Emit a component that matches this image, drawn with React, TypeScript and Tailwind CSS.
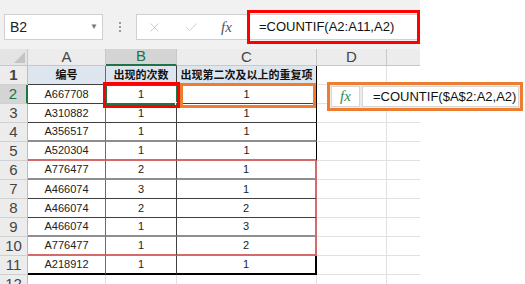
import { X, Check } from "lucide-react";

const FONT = { fontFamily: '"Liberation Sans", "Noto Sans CJK SC", sans-serif' };

const data = [
  ["A667708", "1", "1"],
  ["A310882", "1", "1"],
  ["A356517", "1", "1"],
  ["A520304", "1", "1"],
  ["A776477", "2", "1"],
  ["A466074", "3", "1"],
  ["A466074", "2", "2"],
  ["A466074", "1", "3"],
  ["A776477", "1", "2"],
  ["A218912", "1", "1"],
];

// bottom edge of table cells, row 1..11
const bottoms = [
  "border-b border-b-[#3f3f3f]",
  "border-b border-b-[#3f3f3f]",
  "border-b border-b-[#3f3f3f]",
  "border-b-2 border-b-[#8e8e8e]",
  "border-b-2 border-b-[#d46a6a]",
  "border-b-2 border-b-[#8e8e8e]",
  "border-b border-b-[#3f3f3f]",
  "border-b border-b-[#3f3f3f]",
  "border-b-2 border-b-[#8e8e8e]",
  "border-b-2 border-b-[#d46a6a]",
  "border-b-2 border-b-black",
];

const rightsC = [
  "border-r border-r-black",
  "border-r border-r-black",
  "border-r border-r-black",
  "border-r border-r-black",
  "border-r border-r-black",
  "border-r-2 border-r-[#d46a6a]",
  "border-r-2 border-r-[#d46a6a]",
  "border-r-2 border-r-[#d46a6a]",
  "border-r-2 border-r-[#d46a6a]",
  "border-r-2 border-r-[#d46a6a]",
  "border-r-2 border-r-black",
];

function RowNum({ n, active }: { n: number; active?: boolean }) {
  return (
    <div
      className={
        "w-[28px] h-full flex items-center justify-center text-[15px] border-b border-b-[#d0d0d0] " +
        (active
          ? "bg-[#d4d4d4] text-[#217346] border-r-2 border-r-[#217346]"
          : "bg-[#ececec] text-[#444] border-r border-r-[#bdbdbd]")
      }
    >
      {n}
    </div>
  );
}

function Blank() {
  return (
    <>
      <div className="w-[70px] h-full border-r border-b border-[#e1e1e1]" />
      <div className="w-[33px] h-full border-b border-[#e1e1e1]" />
    </>
  );
}

export default function App() {
  return (
    <div className="relative w-[525px] h-[284px] overflow-hidden bg-white" style={FONT}>
      {/* toolbar */}
      <div className="w-[420px] h-[49px] bg-[#f1f1f1] flex items-start pt-[14px] pl-[4px]">
        <div className="w-[99px] h-[26px] bg-white border border-[#d0d0d0] flex items-center justify-between pl-[5px] pr-[4px] text-[14px] text-[#222]">
          <span>B2</span>
          <span className="text-[8px] text-[#777]">▼</span>
        </div>
        <div className="w-[33px] h-[26px] flex flex-col items-center justify-center gap-[2px]">
          <span className="w-[2px] h-[2px] bg-[#9a9a9a]" />
          <span className="w-[2px] h-[2px] bg-[#9a9a9a]" />
          <span className="w-[2px] h-[2px] bg-[#9a9a9a]" />
        </div>
        <div className="flex-1 h-[26px] bg-white border border-[#d0d0d0] border-r-0 flex items-center">
          <div className="w-[111px] flex items-center pl-[10px] gap-[22px]">
            <X size={15} strokeWidth={1.3} color="#c2c2c2" />
            <Check size={15} strokeWidth={1.3} color="#c2c2c2" />
            <span className="text-[15px] italic text-[#555]" style={{ fontFamily: '"Liberation Serif", serif' }}>
              fx
            </span>
          </div>
        </div>
      </div>

      {/* column headers */}
      <div className="flex h-[17px] w-[420px] text-[15px] text-[#444]">
        <div className="w-[28px] h-full bg-[#e4e4e4] border-r border-b border-[#c8c8c8] flex items-end justify-end p-[2px]">
          <div className="w-0 h-0 border-l-[11px] border-l-transparent border-b-[11px] border-b-[#c4c4c4]" />
        </div>
        <div className="w-[78px] h-full bg-[#ececec] border-r border-b border-[#c8c8c8] flex items-center justify-center">A</div>
        <div className="w-[71px] h-full bg-[#d4d4d4] border-r border-r-[#c8c8c8] border-b-2 border-b-[#217346] flex items-center justify-center text-[#217346]">B</div>
        <div className="w-[140px] h-full bg-[#ececec] border-r border-b border-[#c8c8c8] flex items-center justify-center">C</div>
        <div className="w-[70px] h-full bg-[#ececec] border-r border-b border-[#c8c8c8] flex items-center justify-center">D</div>
        <div className="w-[33px] h-full bg-[#ececec] border-b border-[#c8c8c8]" />
      </div>

      {/* row 1 */}
      <div className="flex h-[19px] w-[420px] text-[11px] font-bold text-[#111]">
        <RowNum n={1} />
        <div className={"w-[78px] h-full bg-[#dde5ef] border-r border-r-[#6b6b6b] flex items-center justify-center " + bottoms[0]}>编号</div>
        <div className={"w-[71px] h-full bg-[#dde5ef] border-r border-r-[#404040] flex items-center justify-center " + bottoms[0]}>出现的次数</div>
        <div className={"w-[140px] h-full bg-[#dde5ef] flex items-center justify-center " + bottoms[0] + " " + rightsC[0]}>出现第二次及以上的重复项</div>
        <Blank />
      </div>

      {data.map((r, i) => (
        <div key={i} className="flex h-[19px] w-[420px] text-[11px] text-[#222]">
          <RowNum n={i + 2} active={i === 0} />
          <div className={"w-[78px] h-full border-r border-r-[#6b6b6b] flex items-center justify-center " + bottoms[i + 1]}>{r[0]}</div>
          <div className={"relative w-[71px] h-full border-r border-r-[#404040] flex items-center justify-center " + bottoms[i + 1]}>
            {r[1]}
          </div>
          <div className={"w-[140px] h-full flex items-center justify-center " + bottoms[i + 1] + " " + rightsC[i + 1]}>{r[2]}</div>
          <Blank />
        </div>
      ))}

      {/* row 12 */}
      <div className="flex h-[19px] w-[420px] text-[15px] text-[#444]">
        <RowNum n={12} />
        <div className="w-[78px] h-full border-r border-b border-[#e1e1e1]" />
        <div className="w-[71px] h-full border-r border-b border-[#e1e1e1]" />
        <div className="w-[140px] h-full border-r border-b border-[#e1e1e1]" />
        <Blank />
      </div>

      {/* formula bar highlight */}
      <div className="absolute left-[247px] top-[10px] w-[173px] h-[34px] border-[3px] border-[#ff0000] flex items-center pl-[9px] text-[13px] text-[#111]">
        =COUNTIF(A2:A11,A2)
      </div>

      {/* active cell B2 */}
      <div className="absolute left-[105px] top-[84px] w-[73px] h-[21px] border-2 border-[#217346]">
        <div className="absolute right-[-4px] bottom-[-4px] w-[5px] h-[5px] bg-[#217346] border border-white" />
      </div>
      <div className="absolute left-[103px] top-[82px] w-[77px] h-[26px] border-[3px] border-[#ff0000]" />

      {/* C2 highlight */}
      <div className="absolute left-[180px] top-[83px] w-[136px] h-[25px] border-[3px] border-[#ed7d31]" />

      {/* formula callout */}
      <div className="absolute left-[327px] top-[82px] w-[196px] h-[29px] border-[3px] border-[#ed7d31] bg-[#ececec] flex p-[1px] gap-[2px]">
        <div className="w-[29px] h-full bg-white border border-[#d6d6d6] flex items-center justify-center">
          <span className="text-[15px] italic text-[#2e8b57]" style={{ fontFamily: '"Liberation Serif", serif' }}>
            fx
          </span>
        </div>
        <div className="flex-1 h-full bg-white border border-[#d6d6d6] flex items-center pl-[10px] text-[13px] text-[#111]">
          =COUNTIF($A$2:A2,A2)
        </div>
      </div>
    </div>
  );
}
